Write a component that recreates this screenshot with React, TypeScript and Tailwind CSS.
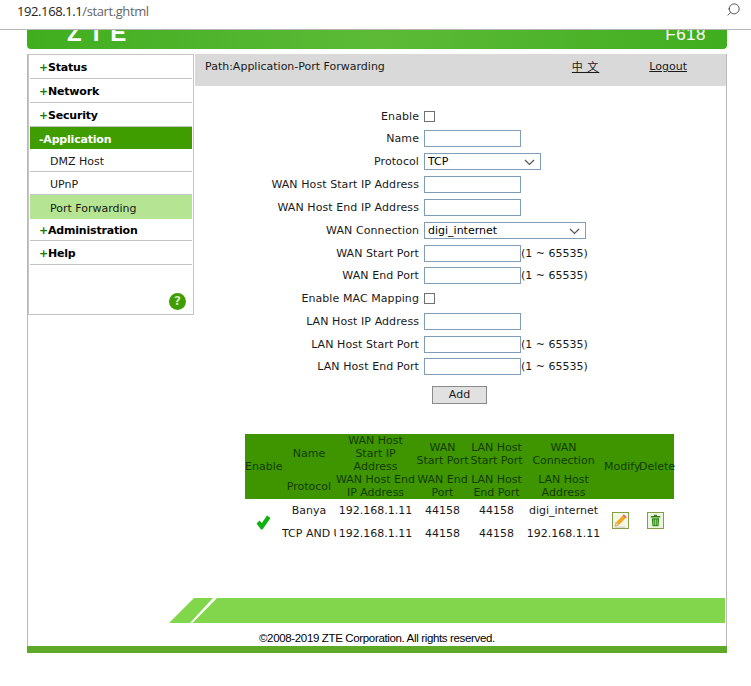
import React from 'react';
import { Search } from 'lucide-react';

const formRows = [
  { label: 'Enable', kind: 'check', h: 'h-[22px]' },
  { label: 'Name', kind: 'text', h: 'h-[23px]' },
  { label: 'Protocol', kind: 'protocol', h: 'h-[23px]' },
  { label: 'WAN Host Start IP Address', kind: 'text', h: 'h-[23px]' },
  { label: 'WAN Host End IP Address', kind: 'text', h: 'h-[23px]' },
  { label: 'WAN Connection', kind: 'wan', h: 'h-[23px]' },
  { label: 'WAN Start Port', kind: 'port', h: 'h-[22px]' },
  { label: 'WAN End Port', kind: 'port', h: 'h-[23px]' },
  { label: 'Enable MAC Mapping', kind: 'check', h: 'h-[23px]' },
  { label: 'LAN Host IP Address', kind: 'text', h: 'h-[23px]' },
  { label: 'LAN Host Start Port', kind: 'port', h: 'h-[22px]' },
  { label: 'LAN Host End Port', kind: 'port', h: 'h-[23px]' },
];

const Chevron = () => (
  <svg width="11" height="7" viewBox="0 0 11 7" className="absolute right-[5px] top-[5px]">
    <path d="M1 1l4.5 4.5L10 1" fill="none" stroke="#555" strokeWidth="1.2" />
  </svg>
);

const Field = ({ kind }: { kind: string }) => {
  if (kind === 'check') {
    return <div className="w-[11px] h-[11px] mb-[2px] border border-[#707070] bg-white" />;
  }
  if (kind === 'text' || kind === 'port') {
    return (
      <div className="flex items-center">
        <div className="w-[97px] h-[17px] mb-[2px] border border-[#7f9db9] bg-white" />
        {kind === 'port' && <span className="whitespace-pre">(1 ~ 65535)</span>}
      </div>
    );
  }
  const wide = kind === 'wan';
  return (
    <div className={`relative h-[17px] mb-[2px] border border-[#7f9db9] bg-white pl-[3px] leading-[15px] text-black ${wide ? 'w-[162px]' : 'w-[117px]'}`}>
      {wide ? 'digi_internet' : 'TCP'}
      <Chevron />
    </div>
  );
};

const Pencil = () => (
  <svg width="17" height="17" viewBox="0 0 18 18">
    <rect x="0.5" y="0.5" width="17" height="17" fill="#f4f6e6" stroke="#7d9a3c" />
    <path d="M3 15l1.2-4 2.8 2.8z" fill="#f3d9a0" stroke="#a97a34" strokeWidth="0.5" />
    <path d="M4.4 10.8l7-7 2.9 2.9-7 7z" fill="#f5a623" />
    <path d="M11.4 3.8l1.2-1.2 2.9 2.9-1.2 1.2z" fill="#e0526a" />
    <path d="M3 16h11" stroke="#c9c9b8" strokeWidth="1" />
  </svg>
);

const Trash = () => (
  <svg width="17" height="17" viewBox="0 0 18 18">
    <rect x="0.5" y="0.5" width="17" height="17" fill="#eef4e0" stroke="#7d9a3c" />
    <path d="M7.5 3h3v1.2h3.5v1.6H4V4.2h3.5z" fill="#2f7d12" />
    <path d="M5 6.5h8l-.8 8.5H5.8z" fill="#2f8a14" />
    <path d="M7.2 8v6M9 8v6M10.8 8v6" stroke="#bfe59a" strokeWidth="0.8" />
  </svg>
);

const TopItem = ({ label, h }: { label: string; h: string }) => (
  <div className={`${h} border-b border-[#c4c4c4] flex items-center pl-[9px] pt-[4px] font-bold text-black tracking-[-0.2px]`}>
    <span><span className="text-[#1a7a00]">+</span>{label}</span>
  </div>
);

const SubItem = ({ label }: { label: string }) => (
  <div className="h-[23px] border-b border-[#c4c4c4] flex items-center pl-[20px] pt-[5px]">{label}</div>
);

export default function App() {
  return (
    <div className="w-[751px] h-[686px] bg-white overflow-hidden font-['DejaVu_Sans',sans-serif] text-[11px] text-[#1a1a1a]">
      <div className="h-[30px] border-b border-[#b5b5b5] flex justify-between pl-[17px] pr-[10px]">
        <span className="text-[13px] leading-[22px] tracking-[-0.4px] font-['Open_Sans',sans-serif] text-[#222]">
          192.168.1.1<span className="text-[#666]">/start.ghtml</span>
        </span>
        <Search size={15} strokeWidth={1.3} className="text-[#333] -scale-x-100 mt-[2px]" />
      </div>

      <div className="mx-[27px] w-[700px]">
        <div className="h-[19px] rounded-b-[4px] bg-gradient-to-r from-[#3fae1e] via-[#5cba36] to-[#3fae1e] overflow-hidden flex justify-between text-white font-bold pl-[40px] pr-[21px]">
          <span className="text-[24px] leading-[6px] font-['Liberation_Sans',sans-serif] tracking-[7px]">ZTE</span>
          <span className="text-[17px] leading-[9px] font-['Liberation_Sans',sans-serif] font-normal tracking-[0.5px]">F618</span>
        </div>

        <div className="mt-[5px] h-[592px] border-x border-[#b9b9b9] flex flex-col">
          <div className="flex h-[544px]">
            <div className="w-[166px] h-[261px] border border-[#c4c4c4] px-[1px] shrink-0 flex flex-col">
              <TopItem label="Status" h="h-[24px]" />
              <TopItem label="Network" h="h-[24px]" />
              <TopItem label="Security" h="h-[24px]" />
              <div className="h-[22px] bg-[#3f9d00] text-white font-bold flex items-center pl-[9px] pt-[4px] tracking-[-0.2px]">-Application</div>
              <SubItem label="DMZ Host" />
              <SubItem label="UPnP" />
              <div className="h-[24px] bg-[#b5e592] flex items-center pl-[20px] pt-[5px]">Port Forwarding</div>
              <TopItem label="Administration" h="h-[22px]" />
              <TopItem label="Help" h="h-[24px]" />
              <div className="flex-1 flex justify-end items-end pr-[6px] pb-[4px]">
                <div className="w-[17px] h-[17px] rounded-full bg-[#3f9d00] text-[#cfeab8] font-bold text-[12px] leading-[17px] text-center">?</div>
              </div>
            </div>

            <div className="flex-1 flex flex-col">
              <div className="h-[32px] ml-[1px] bg-[#d9d9d9] flex pt-[6px] pl-[10px] pr-[39px] leading-[13px]">
                <span className="flex-1">Path:Application-Port Forwarding</span>
                <span className="underline font-['Noto_Sans_CJK_SC',sans-serif] mr-[50px] tracking-[1px]">中 文</span>
                <span className="underline">Logout</span>
              </div>

              <div className="mt-[20px] flex flex-col">
                {formRows.map((r) => (
                  <div key={r.label} className={`${r.h} flex items-center`}>
                    <div className="w-[230px] text-right pr-[5px] whitespace-nowrap tracking-[0.08px]">{r.label}</div>
                    <Field kind={r.kind} />
                  </div>
                ))}
              </div>

              <div className="mt-[7px] ml-[238px] w-[55px] h-[18px] bg-[#e1e1e1] border border-[#8a8a8a] text-center leading-[16px]">Add</div>

              <div className="mt-[30px] ml-[51px] w-[429px]">
                <table className="w-full table-fixed border-collapse text-center leading-[13px]">
                  <colgroup>
                    <col className="w-[37px]" />
                    <col className="w-[54px]" />
                    <col className="w-[79px]" />
                    <col className="w-[55px]" />
                    <col className="w-[53px]" />
                    <col className="w-[81px]" />
                    <col className="w-[35px]" />
                    <col className="w-[35px]" />
                  </colgroup>
                  <thead className="bg-[#3f9500] text-[#123c00]">
                    <tr className="h-[39px]">
                      <td rowSpan={2} className="whitespace-nowrap">Enable</td>
                      <td>Name</td>
                      <td>WAN Host Start IP Address</td>
                      <td className="whitespace-nowrap">WAN<br />Start Port</td>
                      <td className="whitespace-nowrap">LAN Host<br />Start Port</td>
                      <td>WAN<br />Connection</td>
                      <td rowSpan={2}>Modify</td>
                      <td rowSpan={2}>Delete</td>
                    </tr>
                    <tr className="h-[26px]">
                      <td>Protocol</td>
                      <td>WAN Host End IP Address</td>
                      <td>WAN End Port</td>
                      <td className="whitespace-nowrap">LAN Host<br />End Port</td>
                      <td>LAN Host<br />Address</td>
                    </tr>
                  </thead>
                  <tbody>
                    <tr className="h-[23px]">
                      <td rowSpan={2}>
                        <svg width="15" height="15" viewBox="0 0 15 15" className="mx-auto">
                          <path d="M0.5 8.5l3-3 2.3 2.5L11 0.5l3.5 2.5L6.5 14.5h-1.5z" fill="#12b012" />
                        </svg>
                      </td>
                      <td>Banya</td>
                      <td>192.168.1.11</td>
                      <td>44158</td>
                      <td>44158</td>
                      <td>digi_internet</td>
                      <td rowSpan={2}><div className="flex justify-center mb-[3px] mr-[2px]"><Pencil /></div></td>
                      <td rowSpan={2}><div className="flex justify-center mb-[3px] mr-[2px]"><Trash /></div></td>
                    </tr>
                    <tr className="h-[23px]">
                      <td className="overflow-hidden whitespace-nowrap">TCP AND UDP</td>
                      <td>192.168.1.11</td>
                      <td>44158</td>
                      <td>44158</td>
                      <td>192.168.1.11</td>
                    </tr>
                  </tbody>
                </table>
              </div>
            </div>
          </div>

          <div className="h-[25px] ml-[141px] mr-[1px] flex">
            <svg width="48" height="25" viewBox="0 0 48 25" className="shrink-0">
              <path d="M0 25L25 0h19L21 25zM23.500 25L48 0v25z" fill="#82d64b" />
            </svg>
            <div className="flex-1 bg-[#82d64b]" />
          </div>

          <div className="mt-[8px] h-[15px] pl-[231px] font-['Liberation_Sans',sans-serif] text-[11.5px] tracking-[-0.35px] leading-[15px] text-black">
            ©2008-2019 ZTE Corporation. All rights reserved.
          </div>
        </div>

        <div className="h-[7px] bg-[#5fa928]" />
      </div>
    </div>
  );
}
